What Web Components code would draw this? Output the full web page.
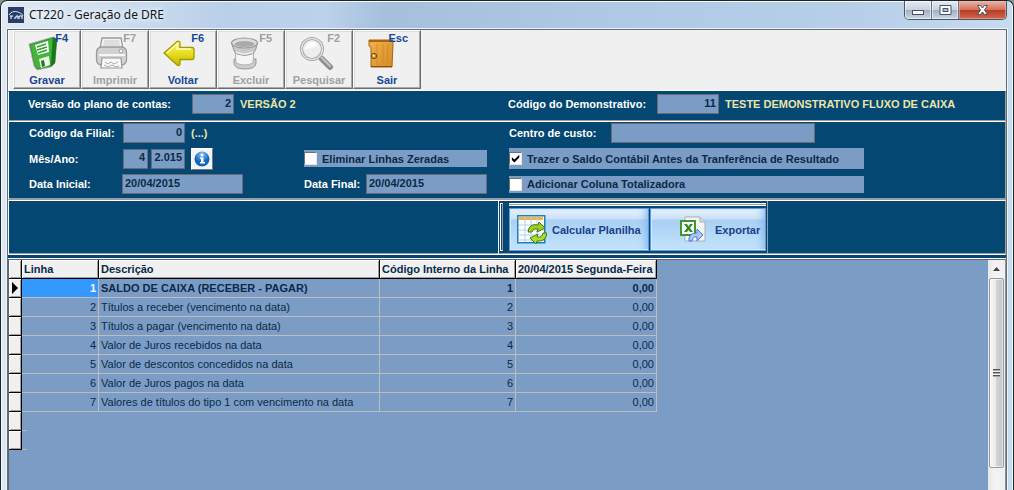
<!DOCTYPE html>
<html lang="pt-BR">
<head>
<meta charset="utf-8">
<title>CT220 - Geração de DRE</title>
<style>
  html, body { margin: 0; height: 100%; }
  body {
    font: 11px/14px "Liberation Sans", Arial, sans-serif;
    background: #8a958f;
    overflow: hidden;
    --navy: #034772;
    --field: #7b9dc5;
    --ink: #0a2a48;
  }
</style>
</head>
<body>
<app-window caption="CT220 - Geração de DRE">
  <tool-bar>
    <tool-button label="Gravar" key="F4">
      <svg width="36" height="36" viewBox="0 0 36 36">
        <path d="M3 9 27 2 31 4 29 28 25 32 11 35 8 31Z" fill="#2fa32c" stroke="#d58ad8" stroke-dasharray="2 1"/>
        <path d="M27 2 31 4 29 28 25 32Z" fill="#177a1a"/>
        <path d="M5 10 26 4 24 29 12 33 9 30Z" fill="#43b63a"/>
        <path d="M9 10 22 6 23 17 12 20Z" fill="#fff"/>
        <path d="M11 12 20 9M11 15 21 12M12 18 21 15" stroke="#2fa32c" stroke-width="1.5"/>
        <path d="M13 24 23 21 24 30 15 33Z" fill="#eef5ee"/>
        <path d="M15 26 18 25 19 31 16 32Z" fill="#177a1a"/>
      </svg>
    </tool-button>
    <tool-button label="Imprimir" key="F7" inactive>
      <svg width="36" height="36" viewBox="0 0 36 36">
        <path d="M8 3h19l2 11H6Z" fill="#f3f3f3" stroke="#999" stroke-width="1.3"/>
        <path d="M10 5h15l1 6H9Z" fill="#dedede"/>
        <rect x="2.5" y="12" width="30" height="18" rx="5" fill="#d2d2d2" stroke="#999" stroke-width="1.3"/>
        <path d="M5 20h26" stroke="#f6f6f6" stroke-width="2"/>
        <circle cx="27" cy="16" r="2" fill="#f5f5f5" stroke="#999"/>
        <path d="M8 23h19l1 10H7Z" fill="#fafafa" stroke="#999" stroke-width="1.2"/>
        <path d="M11 27l3 2 3-2 3 2 4-2M10 30l4 2 4-2 4 2 3-1" fill="none" stroke="#aaa"/>
      </svg>
    </tool-button>
    <tool-button label="Voltar" key="F6">
      <svg width="36" height="36" viewBox="0 0 36 36">
        <defs><linearGradient id="y" x2="0" y2="1"><stop stop-color="#fbf67a"/><stop offset=".5" stop-color="#e9dd22"/><stop offset="1" stop-color="#c4b800"/></linearGradient></defs>
        <path d="M2 18 15 6.500q3-1 3 2v4h12q2 0 2 2v8q0 2-2 2H18v4q0 3-3 1.500Z" fill="url(#y)" stroke="#a39a00" stroke-width="1.3"/>
        <path d="M5 18 15 9v5h14" fill="none" stroke="#fffcb8" stroke-width="1.3"/>
      </svg>
    </tool-button>
    <tool-button label="Excluir" key="F5" inactive>
      <svg width="36" height="36" viewBox="4 0 36 36">
        <path d="M8 28q0 6 11 6t11-6v-4H8Z" fill="#ccc" stroke="#999"/>
        <path d="M9 15h19l-1 13q-8 4-17 0Z" fill="#f5f5f5" stroke="#b0b0b0"/>
        <path d="M6 9q2 9 5 10 8 3 15 0 4-2 5-10Z" fill="#c9c9c9" stroke="#999"/>
        <ellipse cx="18.5" cy="8" rx="13" ry="5" fill="#ddd" stroke="#999" stroke-width="1.2"/>
        <ellipse cx="18.5" cy="9" rx="10" ry="3" fill="#aaa"/>
        <path d="M10 17q8 4 17 0" fill="none" stroke="#eee" stroke-width="1.5"/>
      </svg>
    </tool-button>
    <tool-button label="Pesquisar" key="F2" inactive>
      <svg width="36" height="36" viewBox="0 0 36 36">
        <path d="M24 24 32 32" stroke="#8f8f8f" stroke-width="6" stroke-linecap="round"/>
        <path d="M22 21 32 31" stroke="#c4c4c4" stroke-width="2" stroke-linecap="round"/>
        <circle cx="14" cy="14" r="10.5" fill="#eee" stroke="#a2a2a2" stroke-width="3"/>
        <circle cx="14" cy="14" r="10.5" fill="none" stroke="#dedede" stroke-width="1.5"/>
        <path d="M7 14q2-8 10-7 4 3-1 5t-9 2Z" fill="#fff"/>
      </svg>
    </tool-button>
    <tool-button label="Sair" key="Esc">
      <svg width="36" height="36" viewBox="4 0 36 36">
        <defs><linearGradient id="d" x2="1" y2="1"><stop stop-color="#f3b04e"/><stop offset="1" stop-color="#d78d22"/></linearGradient></defs>
        <path d="M7 5h24v3l-1 24H9V12L7 11Z" fill="url(#d)" stroke="#a8640e"/>
        <path d="M7 5h24v2H7Z" fill="#a8640e"/>
        <path d="M15 9v21M21 9v21M26 9l-1 21" stroke="#c98628" stroke-width=".8"/>
        <path d="M9 31.500h21" stroke="#8a4b04"/>
        <circle cx="12" cy="21" r="2.6" fill="#e2a23c" stroke="#704008"/>
        <circle cx="11.5" cy="20.5" r="1" fill="#fff"/>
      </svg>
    </tool-button>
  </tool-bar>
  <plan-panel></plan-panel>
  <filter-panel></filter-panel>
  <action-panel></action-panel>
  <result-grid></result-grid>
</app-window>

<script>
const define = (name, html, setup) => customElements.define(name, class extends HTMLElement {
  connectedCallback() {
    if (this.shadowRoot) return;
    const t = document.createElement('template');
    t.innerHTML = typeof html === 'function' ? html(a => this.getAttribute(a) || '') : html;
    this.attachShadow({ mode: 'open' }).append(t.content.cloneNode(true));
    if (setup) setup(this);
  }
});

/* Window frame with its caption bar */
define('app-window', a => `<style>
  :host { display: flex; flex-direction: column; box-sizing: border-box; height: 100vh;
    border: solid #20262e; border-width: 1px 1px 0; border-radius: 7px 7px 0 0; padding: 0 6px; overflow: hidden;
    background: linear-gradient(90deg, #dfe9f4, #d3e1f1 8%, #bad0e9 22%, #bcd2ea 32%, #a5bfdc 38%, #afc9e4 60%, #b7cfe9 85%, #c7dbee);
    box-shadow: inset 1px 1px #f4f9fd, inset -1px 0 #f4f9fd; }
  header { display: flex; align-items: flex-start; height: 28px; flex: none; padding-left: 1px; }
  .logo { margin: 6px 5px 0 0; }
  h1 { margin: 6px 0 0; flex: 1; font: 12px/16px "Noto Sans", "Open Sans", sans-serif; color: #101820; text-shadow: 0 0 6px #fff, 0 0 8px #fff; }
  nav { display: flex; border: 1px solid #4c5661; border-top: 0; border-radius: 0 0 5px 5px; overflow: hidden; height: 18px; }
  button { border: 0; border-right: 1px solid #6a7685; padding: 0; width: 27px; display: grid; place-items: center;
    background: linear-gradient(#e4ebf3, #c7d2df 50%, #9fafc3 50%, #c8d7e7); box-shadow: inset 0 0 0 1px #ffffff88; }
  button:last-child { width: 47px; border: 0; background: linear-gradient(#eab5a8, #d6705a 48%, #b93a22 50%, #cf6a50); box-shadow: inset 0 0 0 1px #f0c0b088; }
  main { flex: 1; min-height: 0; display: flex; flex-direction: column; border: solid #606c78; border-width: 1px 1px 0; outline: 1px solid #eef4fa; background: var(--navy); }
</style>
<header>
  <svg class="logo" width="16" height="16" viewBox="0 0 16 16" aria-hidden="true"><rect width="16" height="16" fill="#2b3c68"/><path d="M1 8Q4 3 10 5q4 1 5 4" fill="none" stroke="#d0d6e8"/><path d="M2 9h3M3 9v3M6 11h2V9h2v3M11 12V9h3v3" fill="none" stroke="#fff"/></svg>
  <h1>${a('caption')}</h1>
  <nav>
    <button aria-label="Minimizar"><svg width="13" height="12"><rect x=".5" y="6.5" width="11" height="4" fill="#fff" stroke="#475264"/></svg></button>
    <button aria-label="Restaurar"><svg width="13" height="12"><path d="M1 1.500h11v9H1Z" fill="#fff" stroke="#475264"/><path d="M4 4.500h5v3H4Z" fill="#aebccd" stroke="#475264"/></svg></button>
    <button aria-label="Fechar"><svg width="13" height="12"><path d="M1.500 1.500h3l2 2.500 2-2.500h3L8.500 6l3 4.500h-3l-2-2.500-2 2.500h-3L4.500 6Z" fill="#fff" stroke="#475264"/></svg></button>
  </nav>
</header>
<main><slot></slot></main>`);

define('tool-bar', `<style>
  :host { display: flex; flex: none; background: #f0f0f0; padding: 0 0 1px 5px; box-shadow: inset 1px 0 #fff; border-bottom: 1px solid #fff; }
</style><slot></slot>`);

define('tool-button', a => `<style>
  :host { display: block; }
  button { position: relative; display: flex; flex-direction: column; align-items: center; width: 68px; height: 59px; padding: 4px 0 0; font: bold 11px/14px "Liberation Sans", Arial, sans-serif;
    color: #17479a; background: #f0f0f0; border: 1px solid; border-color: #fff #6d6d6d #6d6d6d #fff; box-shadow: inset -1px -1px #a8a8a8, inset 1px 1px #dcdcdc; }
  button:disabled { color: #a0a0a0; }
  ::slotted(svg) { margin-right: 6px; }
  .key { position: absolute; top: 0; right: 12px; }
  .name { margin-top: 2px; }
</style>
<button><slot></slot><span class="key">${a('key')}</span><span class="name">${a('label')}</span></button>`,
  el => { el.shadowRoot.querySelector('button').disabled = el.hasAttribute('inactive'); });

/* Labelled text box; the note is the description that follows the code */
define('text-field', a => `<style>
  :host { display: flex; align-items: center; font-weight: bold; color: #fff; }
  label { width: ${a('label-width') || 0}px; flex: none; white-space: nowrap; }
  input { box-sizing: border-box; width: ${a('width')}px; height: 20px; border: 1px solid #666c76; border-radius: 0; padding: 0 2px 3px; margin: 0;
    font: inherit; color: var(--ink); background: var(--field); text-align: ${a('align') || 'right'}; outline: 0; }
  output { color: #ebe5a7; margin-left: 6px; white-space: nowrap; }
</style>
${a('label') ? `<label for="i">${a('label')}</label>` : ''}<input id="i" type="text" value="${a('value')}" ${a('name') ? `aria-label="${a('name')}"` : ''}>${a('note') ? `<output for="i">${a('note')}</output>` : ''}`);

define('check-field', a => `<style>
  :host { display: flex; align-items: center; background: var(--field); font-weight: bold; color: var(--ink); }
  input { appearance: none; width: 13px; height: 13px; margin: 0 5px 0 0; background: #fff; flex: none;
    border: 1px solid; border-color: #707070 #e8e8e8 #e8e8e8 #707070; display: grid; place-items: center; }
  input:checked::before { content: ""; width: 9px; height: 9px; background: #000; clip-path: polygon(10% 35%, 38% 62%, 92% 8%, 92% 38%, 38% 94%, 10% 66%); }
  label { white-space: nowrap; }
</style><input id="c" type="checkbox"><label for="c">${a('label')}</label>`,
  el => { el.shadowRoot.querySelector('input').checked = el.hasAttribute('checked'); });

define('plan-panel', `<style>
  :host { display: grid; grid-template-columns: 480px 1fr; align-items: center; padding: 2px 0 6px 19px; height: 20px; flex: none;
    border: 1px solid #9a9ea4; border-top-color: var(--navy); border-left-color: #fff; }
</style>
<text-field label="Versão do plano de contas:" label-width="164" width="42" value="2" note="VERSÃO 2"></text-field>
<text-field label="Código do Demonstrativo:" label-width="149" width="62" value="11" note="TESTE DEMONSTRATIVO FLUXO DE CAIXA"></text-field>`);

define('filter-panel', `<style>
  :host { display: grid; grid-template: 20px 21px 20px / 94px 181px 205px 1fr; row-gap: 5px; padding: 1px 0 4px 20px; flex: none;
    border: solid; border-width: 1px 1px 2px 1px; border-color: #fff #9a9ea4 #9a9ea4 #fff; }
  .left { grid-column: 1 / 4; }
  .split { grid-column: 1 / 3; display: flex; gap: 3px; align-items: center; }
  .split button { width: 22px; height: 22px; margin-left: 3px; padding: 0; display: grid; place-items: center; background: #f4f4f4; border: 1px solid; border-color: #fff #777 #777 #fff; }
  .dates { grid-column: 1 / 3; }
  .short { width: 183px; height: 17px; align-self: center; }
  .long { width: 355px; }
  .low { height: 17px; align-self: center; }
</style>
<text-field class="left" label="Código da Filial:" label-width="94" width="62" value="0" note="(...)"></text-field>
<text-field label="Centro de custo:" label-width="102" width="204" value=""></text-field>
<div class="split">
  <text-field label="Mês/Ano:" label-width="94" width="25" value="4"></text-field>
  <text-field name="Ano" width="34" value="2.015"></text-field>
  <button aria-label="Informações"><svg width="16" height="16" viewBox="0 0 16 16"><defs><radialGradient id="g" cy=".2"><stop stop-color="#8cc4f4"/><stop offset="1" stop-color="#1266c0"/></radialGradient></defs><circle cx="8" cy="8" r="7.5" fill="url(#g)"/><circle cx="8" cy="4" r="1.5" fill="#fff"/><path d="M6 6.500h3.500V11H11v1.500H6V11h1V8H6Z" fill="#fff"/></svg></button>
</div>
<check-field class="short" label="Eliminar Linhas Zeradas"></check-field>
<check-field class="long" label="Trazer o Saldo Contábil Antes da Tranferência de Resultado" checked></check-field>
<text-field class="dates" label="Data Inicial:" label-width="93" width="121" align="left" value="20/04/2015"></text-field>
<text-field label="Data Final:" label-width="62" width="121" align="left" value="20/04/2015"></text-field>
<check-field class="long low" label="Adicionar Coluna Totalizadora"></check-field>`);

define('action-panel', `<style>
  :host { display: flex; padding-left: 489px; flex: none; height: 53px;
    border: 1px solid; border-color: #fff #9a9ea4 #fff #fff; box-shadow: inset 0 -1px #9a9ea4; margin-bottom: 4px; }
  .bar { display: flex; box-sizing: border-box; width: 270px; padding: 2px 1px 2px 1px; border: solid; border-width: 0 1px 1px; border-color: #fff #9a9ea4 #9a9ea4 #fff; }
  .grip { width: 1px; border: 1px solid; border-color: #fff #9a9ea4 #fff #fff; margin-right: 6px; }
  .body { flex: 1; display: flex; flex-direction: column; gap: 2px; }
  .line { height: 1px; border-top: 1px solid #fff; border-bottom: 1px solid #fff; background: #9a9ea4; }
  .buttons { display: flex; flex: 1; gap: 1px; }
  button { display: flex; align-items: center; box-sizing: border-box; padding: 0 0 0 7px; gap: 5px; font: bold 11px/14px "Liberation Sans", Arial, sans-serif; color: #17408b; white-space: nowrap;
    border: 1px solid #5c9ae4; background: linear-gradient(#e9f3fc, #c9e0f7 10px, #a9cff4 11px, #c4e4fc); box-shadow: inset 1px -1px #d4e9fc, inset -6px 0 8px -5px #77aeea; }
  .calc { width: 140px; }
  .export { flex: 1; padding-left: 28px; gap: 8px; }
</style>
<div class="bar">
  <div class="grip"></div>
  <div class="body">
    <div class="line"></div>
    <div class="buttons">
      <button class="calc"><svg width="30" height="32" viewBox="0 0 30 32"><rect x=".75" y="1.75" width="27" height="27" fill="#fff" stroke="#1b80bd" stroke-width="1.5"/><path d="M2 3h24v3H2Z" fill="#f7b13d"/><path d="M2 11h25M2 16h25M2 21h25M2 26h25M8 3v25M14 3v25M20 3v25" stroke="#a9d4ef"/><path d="M11 18q1-9 10-7l1-3 6 6-8 4 1-3q-5-1-6 3Z" fill="#9bd01c" stroke="#47780c"/><path d="M30 19q-1 9-10 8l-1 3-6-6 8-4-1 3q5 1 6-4Z" fill="#a9dd2c" stroke="#47780c"/></svg>Calcular Planilha</button>
      <button class="export"><svg width="28" height="28" viewBox="0 0 28 28"><path d="M6 1h15l5 5v19H6Z" fill="#f5f6f8" stroke="#a7adb5"/><path d="M21 1v5h5" fill="#dce0e5" stroke="#a7adb5"/><rect x="2" y="5" width="14" height="14" fill="#fff" stroke="#3c9a2c" stroke-width="2"/><path d="M5 8h3l1.500 2.500L11 8h3l-3 4 3 4h-3l-1.500-2L8 16H5l3-4Z" fill="#2d8c22"/><path d="M10 25q-1-8 8-8v-4l6 6-6 6v-4q-4-1-5 4Z" fill="#a6c8fa" stroke="#4c79c8"/></svg>Exportar</button>
    </div>
  </div>
</div>`);

const rows = ['SALDO DE CAIXA (RECEBER - PAGAR)', 'Títulos a receber (vencimento na data)', 'Títulos a pagar (vencimento na data)',
  'Valor de Juros recebidos na data', 'Valor de descontos concedidos na data', 'Valor de Juros pagos na data',
  'Valores de títulos do tipo 1 com vencimento na data'];

define('result-grid', `<style>
  :host { display: flex; flex: 1; min-height: 0; justify-content: space-between; background: var(--field); border: solid; border-width: 1px 1px 0; border-color: #5f666e #8b9299 #5f666e #5f666e; box-shadow: 0 -1px #fff; color: var(--ink); }
  table { table-layout: fixed; width: 648px; border-spacing: 0; align-self: flex-start; }
  th, td { box-sizing: border-box; height: 19px; padding: 0 2px; white-space: nowrap; border: solid #bdbdbd; border-width: 0 1px 1px 0; text-align: right; line-height: 14px; }
  th { text-align: left; background: #f0f0f0; border-color: #000; box-shadow: inset 1px 1px #fff, inset -1px -1px #a0a0a0; }
  td:nth-child(3) { text-align: left; }
  tr.current td { font-weight: bold; }
  tr.current td:nth-child(2) { background: #3399ff; color: #fff; }
  tr.blank td { border: 0; padding: 0; background: linear-gradient(#bdbdbd, #bdbdbd) left bottom / 5px 1px no-repeat; }
  tbody th svg { display: block; }
</style>
<table>
  <colgroup><col style="width:13px"><col style="width:77px"><col style="width:281px"><col style="width:136px"><col style="width:141px"></colgroup>
  <thead><tr><th></th><th>Linha</th><th>Descrição</th><th>Código Interno da Linha</th><th>20/04/2015 Segunda-Feira</th></tr></thead>
  <tbody>${rows.map((r, i) => `<tr${i ? '' : ' class="current"'}><th>${i ? '' : '<svg width="8" height="12"><path d="M1 0 7 6 1 12Z"/></svg>'}</th><td>${i + 1}</td><td>${r}</td><td>${i + 1}</td><td>0,00</td></tr>`).join('')}
  <tr class="blank"><th></th><td colspan="4"></td></tr><tr class="blank"><th></th><td colspan="4"></td></tr></tbody>
</table>
<scroll-rail></scroll-rail>`);

define('scroll-rail', `<style>
  :host { display: flex; flex-direction: column; align-items: center; width: 17px; background: linear-gradient(90deg, #e8e8e8, #f3f3f3 40%, #f0f0f0); }
  .up { width: 7px; height: 4px; margin: 7px 0; background: #444; clip-path: polygon(50% 0, 100% 100%, 0 100%); }
  .thumb { box-sizing: border-box; width: 15px; height: 190px; border: 1px solid #95999e; border-radius: 2px; display: grid; place-items: center;
    background: linear-gradient(90deg, #f7f7f7, #e9e9eb 45%, #d2d3d6 50%, #c3c5ca); box-shadow: inset 0 0 0 1px #ffffff99; }
  .thumb i { width: 7px; height: 8px; background: repeating-linear-gradient(#555 0 1px, #aaa 1px 2px, #f4f4f4 2px 3px); }
</style><div class="up"></div><div class="thumb"><i></i></div>`);
</script>
</body>
</html>
